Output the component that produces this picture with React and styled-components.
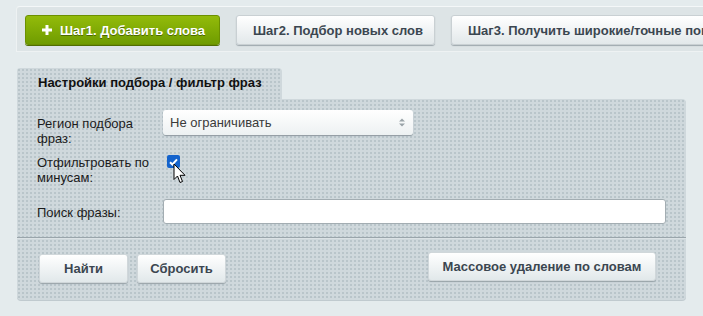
import React from 'react';
import styled, { createGlobalStyle } from 'styled-components';

const GlobalStyle = createGlobalStyle`
  body {
    margin: 0;
    background: #e4ebed;
    font-family: "Liberation Sans", Arial, sans-serif;
    font-size: 13px;
    color: #111;
  }
`;

const Page = styled.div`
  width: 703px;
  height: 316px;
  overflow: hidden;
  padding-top: 6px;
  box-sizing: border-box;
`;

const Toolbar = styled.div`
  margin-left: 16px;
  height: 46px;
  box-sizing: border-box;
  padding: 8px 0 0 8px;
  display: flex;
  gap: 16px;
  background: #dde4e6;
  border-top: 1px solid #f4f7f8;
  border-left: 1px solid #eef2f3;
  border-bottom: 1px solid #eef2f3;
  border-top-left-radius: 4px;
  white-space: nowrap;
  overflow: hidden;
`;

const StepButton = styled.button`
  flex: none;
  height: 30px;
  padding: 0 16px;
  border-radius: 3px;
  font-family: "Liberation Sans", Arial, sans-serif;
  font-size: 13px;
  font-weight: bold;
  display: flex;
  align-items: center;
  gap: 8px;
  cursor: pointer;
  border: 1px solid ${p => (p.$primary ? '#6c9000' : '#c9d0d3')};
  background: ${p =>
    p.$primary
      ? 'linear-gradient(#93bb0a, #6f9c00)'
      : 'linear-gradient(#ffffff, #e2e8ea)'};
  color: ${p => (p.$primary ? '#fff' : '#3b4650')};
  text-shadow: ${p => (p.$primary ? '0 1px 0 #4d6a00' : 'none')};
  box-shadow: ${p => (p.$primary ? '0 1px 0 #4f6e00' : '0 1px 1px #9ea8ad')};
  width: ${p => p.$w || 'auto'};
`;

const PlusIcon = styled.svg`
  width: 10px;
  height: 10px;
  flex: none;
`;

const Panel = styled.div`
  margin: 16px 17px 0 17px;
  width: 669px;
`;

const dots = `
  background-color: #cfd8dc;
  background-image: radial-gradient(#b9c5ca 0.8px, transparent 1.1px);
  background-size: 4px 4px;
`;

const Tab = styled.div`
  ${dots}
  width: 265px;
  height: 31px;
  box-sizing: border-box;
  padding: 7px 0 0 21px;
  border-radius: 3px 4px 0 0;
  font-weight: bold;
  font-size: 13px;
  color: #111;
`;

const Body = styled.div`
  ${dots}
  border-radius: 0 4px 4px 4px;
  height: 201px;
  box-sizing: border-box;
  padding-top: 11px;
  box-shadow: 0 1px 0 #c0cacf;
`;

const Row = styled.div`
  display: grid;
  grid-template-columns: 126px 1fr;
  align-items: start;
  padding: 0 20px;
  min-height: ${p => p.$h || 'auto'};
`;

const Label = styled.label`
  padding-top: ${p => p.$top || '0'};
  width: 120px;
  line-height: 15px;
  color: #1b1b1b;
`;

const Select = styled.div`
  width: 250px;
  height: 25px;
  box-sizing: border-box;
  border-radius: 3px;
  background: linear-gradient(#ffffff, #edf1f2);
  box-shadow: 0 1px 1px #8f9aa0;
  display: flex;
  align-items: center;
  justify-content: space-between;
  padding: 0 8px 0 7px;
  color: #3a3a3a;
`;

const Arrows = styled.svg`
  width: 6px;
  height: 9px;
`;

const Check = styled.span`
  position: relative;
  display: inline-flex;
  align-items: center;
  justify-content: center;
  margin: 4px 0 0 4px;
  width: 13px;
  height: 13px;
  border-radius: 2px;
  background: #1463cc;
`;

const Cursor = styled.svg`
  position: absolute;
  left: 6px;
  top: 8px;
  width: 13px;
  height: 21px;
`;

const TextInput = styled.input`
  width: 503px;
  height: 25px;
  box-sizing: border-box;
  border: 1px solid #a3adb2;
  border-radius: 3px;
  background: #fff;
  margin: 0;
`;

const Divider = styled.div`
  margin-top: 13px;
  height: 1px;
  background: #9aa5ab;
  box-shadow: 0 1px 0 #dbe2e5;
`;

const Actions = styled.div`
  display: flex;
  gap: 9px;
  padding: 16px 30px 0 22px;
`;

const ActionButton = styled.button`
  height: 29px;
  width: ${p => p.$w};
  margin-top: ${p => p.$mt || '0'};
  margin-left: ${p => (p.$push ? 'auto' : '0')};
  border: 1px solid #d0d7da;
  border-radius: 3px;
  background: linear-gradient(#ffffff, #e1e8ea);
  box-shadow: 0 1px 1px #98a3a8;
  font-family: "Liberation Sans", Arial, sans-serif;
  font-size: 13px;
  font-weight: bold;
  color: #3b4650;
  cursor: pointer;
`;

export default function App() {
  return (
    <Page>
      <GlobalStyle />
      <Toolbar>
        <StepButton $primary $w="195px">
          <PlusIcon viewBox="0 0 10 10">
            <path d="M3.5 0 H6.5 V3.5 H10 V6.5 H6.5 V10 H3.5 V6.5 H0 V3.5 H3.5 Z" fill="#fff" />
          </PlusIcon>
          Шаг1. Добавить слова
        </StepButton>
        <StepButton $w="199px">Шаг2. Подбор новых слов</StepButton>
        <StepButton>Шаг3. Получить широкие/точные показатели</StepButton>
      </Toolbar>
      <Panel>
        <Tab>Настройки подбора / фильтр фраз</Tab>
        <Body>
          <Row $h="41px">
            <Label $top="6px">Регион подбора фраз:</Label>
            <Select>
              Не ограничивать
              <Arrows viewBox="0 0 6 9">
                <path d="M0 3.5 L3 0.5 L6 3.5 Z M0 5.5 L3 8.5 L6 5.5 Z" fill="#9aa3a8" />
              </Arrows>
            </Select>
          </Row>
          <Row $h="48px">
            <Label $top="4px">Отфильтровать по минусам:</Label>
            <div>
              <Check>
                <svg width="9" height="8" viewBox="0 0 9 8">
                  <path d="M1 4.2 L3.4 6.5 L8 1.3" stroke="#fff" strokeWidth="2" fill="none" />
                </svg>
                <Cursor viewBox="0 0 13 21">
                  <path
                    d="M1 1 L1 16.5 L4.5 13 L7 19.5 L9.5 18.5 L7 12.3 L12 12.3 Z"
                    fill="#fff"
                    stroke="#000"
                    strokeWidth="1"
                    strokeLinejoin="round"
                  />
                </Cursor>
              </Check>
            </div>
          </Row>
          <Row>
            <Label $top="6px">Поиск фразы:</Label>
            <TextInput type="text" />
          </Row>
          <Divider />
          <Actions>
            <ActionButton $w="89px">Найти</ActionButton>
            <ActionButton $w="89px">Сбросить</ActionButton>
            <ActionButton $w="228px" $push $mt="-2px">
              Массовое удаление по словам
            </ActionButton>
          </Actions>
        </Body>
      </Panel>
    </Page>
  );
}
